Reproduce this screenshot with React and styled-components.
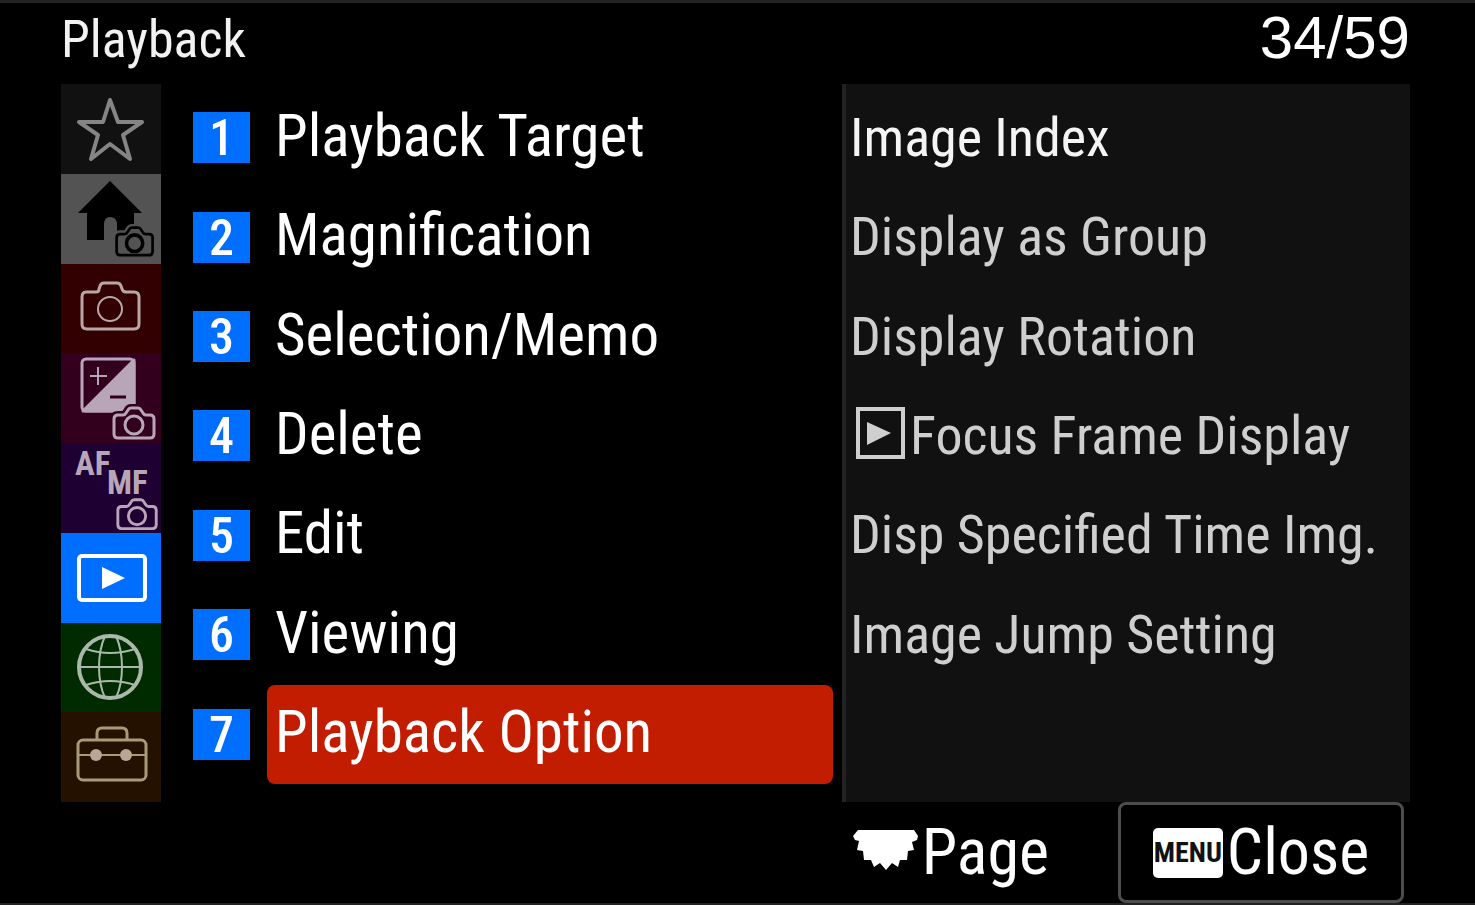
import React, { useState } from "react";
import styled, { createGlobalStyle } from "styled-components";

const GlobalStyle = createGlobalStyle`
  *, *::before, *::after { box-sizing: border-box; }
  body {
    margin: 0;
    background: #000;
    font-family: "Roboto Condensed", "Liberation Sans Narrow", "Liberation Sans", sans-serif;
  }
  button {
    margin: 0;
    padding: 0;
    border: 0;
    background: none;
    color: inherit;
    font: inherit;
    text-align: left;
    cursor: pointer;
  }
`;

const Screen = styled.div`
  min-height: 100vh;
  display: flex;
  flex-direction: column;
  padding: 0 65px 0 61px;
  border-top: 3px solid #222;
  border-bottom: 2px solid #222;
  background: #000;
  color: #fff;
`;

const Header = styled.header`
  display: flex;
  align-items: center;
  justify-content: space-between;
  height: 81px;
  padding-bottom: 8px;
`;

const Title = styled.h1`
  margin: 0;
  font-size: 52px;
  font-weight: 400;
  line-height: 64px;
  color: #f2f2f2;
`;

const Counter = styled.span`
  padding-bottom: 4px;
  font-family: "Liberation Sans", sans-serif;
  font-size: 60px;
  line-height: 64px;
`;

const Main = styled.main`
  flex: 1;
  display: grid;
  grid-template-columns: 100px minmax(0, 681fr) minmax(0, 568fr);
`;

const TabBar = styled.nav`
  display: grid;
  grid-template-rows: repeat(8, 1fr);
`;

const Tab = styled.button`
  display: flex;
  align-items: center;
  justify-content: center;
  min-height: 0;
  background: ${(p) => p.$bg};
  color: ${(p) => p.$fg};
`;

const TabIcon = styled.svg`
  display: block;
  width: 100px;
  height: 88px;
  fill: none;
  stroke: currentColor;
  stroke-width: 3;
  stroke-linejoin: round;
`;

const IconLabel = styled.text`
  fill: currentColor;
  stroke: none;
  font-size: 33px;
  font-weight: 700;
`;

const Menu = styled.div`
  display: grid;
  grid-template-rows: repeat(7, 1fr);
  padding: 4px 9px 18px 32px;
`;

const MenuRow = styled.button`
  display: grid;
  grid-template-columns: 57px 1fr;
  gap: 17px;
  align-items: center;
`;

const Badge = styled.span`
  height: 51px;
  background: #006eff;
  font-size: 50px;
  font-weight: 500;
  line-height: 52px;
  text-align: center;
`;

const MenuLabel = styled.span`
  display: flex;
  align-items: center;
  height: 100%;
  padding: 0 8px 4px;
  border-radius: 8px;
  background: ${(p) => (p.$selected ? "#c21d00" : "transparent")};
  font-size: 59px;
  line-height: 72px;
  white-space: nowrap;
`;

const Preview = styled.ul`
  display: grid;
  grid-template-rows: repeat(7, 1fr);
  margin: 0;
  padding: 4px 0 18px 4px;
  border-left: 4px solid #222;
  background: #111;
  list-style: none;
`;

const PreviewItem = styled.li`
  display: flex;
  align-items: center;
  gap: 5px;
  color: ${(p) => (p.$active ? "#f4f4f4" : "#cfcfcf")};
  font-size: 54px;
  line-height: 64px;
  white-space: nowrap;
`;

const PlayBox = styled.svg`
  width: 49px;
  height: 52px;
  margin: 0 0 6px 6px;
`;

const Footer = styled.footer`
  display: flex;
  align-items: center;
  justify-content: flex-end;
  gap: 69px;
  height: 101px;
  padding-right: 6px;
`;

const FooterButton = styled.button`
  display: flex;
  align-items: center;
  justify-content: center;
  gap: 4px;
  height: 100%;
  font-size: 64px;
  line-height: 72px;
`;

const CloseButton = styled(FooterButton)`
  width: 286px;
  border: 3px solid #4d4d4d;
  border-radius: 8px;
`;

const MenuKey = styled.span`
  width: 70px;
  height: 50px;
  border-radius: 5px;
  background: #fff;
  color: #111;
  font-size: 28px;
  font-weight: 700;
  line-height: 50px;
  text-align: center;
`;

const WheelIcon = styled.svg`
  width: 65px;
  height: 41px;
  margin-bottom: 4px;
`;

function SmallCamera({ cut, lens = 3 }) {
  const body =
    "M58 62H63Q65 62 66 60L68 57Q69 55 71 55H78Q80 55 81 57L83 60Q84 62 86 62H90Q94 62 94 66V81Q94 85 90 85H58Q54 85 54 81V66Q54 62 58 62Z";
  return (
    <g>
      <path d={body} fill={cut} stroke={cut} strokeWidth="8" />
      <path d={body} />
      <circle cx="74" cy="72" r="9" strokeWidth={lens} />
    </g>
  );
}

const tabs = [
  {
    name: "My Menu",
    bg: "#111",
    fg: "#858585",
    icon: (
      <path d="M49 16L57 38H81L62 51L69 75L49 60L30 75L37 51L18 38H42Z" strokeWidth="4" />
    ),
  },
  {
    name: "Main",
    bg: "#535353",
    fg: "#000",
    icon: (
      <>
        <path
          d="M49 7L81 39H73V66H56V49Q55 43 49 43Q43 43 43 51V66H26V39H17Z"
          fill="currentColor"
          stroke="none"
        />
        <g transform="translate(7 3) scale(.9 .92)">
          <SmallCamera cut="#535353" lens={4} />
        </g>
      </>
    ),
  },
  {
    name: "Shooting",
    bg: "#320000",
    fg: "#b9a7a7",
    icon: (
      <>
        <path d="M25 29H35Q38 29 38 26L39 23Q40 20 43 20H56Q59 20 60 23L61 26Q62 29 65 29H73Q78 29 78 34V61Q78 66 73 66H26Q21 66 21 61V34Q21 29 25 29Z" />
        <circle cx="49" cy="46" r="12" strokeWidth="2" />
      </>
    ),
  },
  {
    name: "Exposure and Color",
    bg: "#32001d",
    fg: "#b9a5b8",
    icon: (
      <>
        <path d="M73 7V58H22Z" fill="currentColor" />
        <rect x="21" y="6" width="52" height="52" rx="4" />
        <path d="M29 23H46M37 14V32" strokeWidth="2" />
        <path d="M49 44H65" stroke="#32001d" />
        <g transform="translate(-1 0)">
          <SmallCamera cut="#32001d" />
        </g>
      </>
    ),
  },
  {
    name: "Focus",
    bg: "#1f0032",
    fg: "#b8a6b8",
    icon: (
      <>
        <IconLabel x="14" y="32">AF</IconLabel>
        <IconLabel x="46" y="51">MF</IconLabel>
        <g transform="translate(5 4) scale(.96)">
          <SmallCamera cut="#1f0032" />
        </g>
      </>
    ),
  },
  {
    name: "Playback",
    bg: "#006eff",
    fg: "#fff",
    icon: (
      <>
        <rect x="18" y="23" width="66" height="44" rx="3" strokeWidth="4" />
        <path d="M41 34L64 45L41 56Z" fill="currentColor" stroke="none" />
      </>
    ),
  },
  {
    name: "Network",
    bg: "#002a00",
    fg: "#a9b9a9",
    icon: (
      <>
        <circle cx="49" cy="45" r="31" strokeWidth="4" />
        <path
          d="M18 45H80M25 27Q49 35 74 27M25 63Q49 55 74 63M44 14C36 32 36 58 44 76M55 14C63 32 63 58 55 76"
          strokeWidth="2"
        />
      </>
    ),
  },
  {
    name: "Setup",
    bg: "#251100",
    fg: "#a89c78",
    icon: (
      <>
        <rect x="17" y="28" width="68" height="40" rx="5" />
        <path d="M36 28V21Q36 16 41 16H61Q66 16 66 21V28" />
        <path d="M17 43H85" strokeWidth="2" />
        <circle cx="35" cy="43" r="6" fill="#b9a796" stroke="none" />
        <circle cx="65" cy="43" r="6" fill="#b9a796" stroke="none" />
      </>
    ),
  },
];

const groups = [
  "Playback Target",
  "Magnification",
  "Selection/Memo",
  "Delete",
  "Edit",
  "Viewing",
  "Playback Option",
];

const options = [
  { label: "Image Index", active: true },
  { label: "Display as Group" },
  { label: "Display Rotation" },
  { label: "Focus Frame Display", play: true },
  { label: "Disp Specified Time Img." },
  { label: "Image Jump Setting" },
];

export default function App() {
  const [selected, setSelected] = useState(6);
  return (
    <>
      <GlobalStyle />
      <Screen>
        <Header>
          <Title>Playback</Title>
          <Counter>34/59</Counter>
        </Header>
        <Main>
          <TabBar aria-label="Menu tabs">
            {tabs.map((t) => (
              <Tab key={t.name} type="button" aria-label={t.name} $bg={t.bg} $fg={t.fg}>
                <TabIcon viewBox="0 1 100 88" aria-hidden="true">
                  {t.icon}
                </TabIcon>
              </Tab>
            ))}
          </TabBar>
          <Menu>
            {groups.map((label, i) => (
              <MenuRow key={label} type="button" onClick={() => setSelected(i)}>
                <Badge>{i + 1}</Badge>
                <MenuLabel $selected={i === selected}>{label}</MenuLabel>
              </MenuRow>
            ))}
          </Menu>
          <Preview>
            {options.map((o) => (
              <PreviewItem key={o.label} $active={o.active}>
                {o.play && (
                  <PlayBox viewBox="0 0 49 52" aria-hidden="true">
                    <rect x="2" y="2" width="45" height="48" fill="none" stroke="currentColor" strokeWidth="4" />
                    <path d="M11 15L35 26L11 38Z" fill="currentColor" />
                  </PlayBox>
                )}
                {o.label}
              </PreviewItem>
            ))}
          </Preview>
        </Main>
        <Footer>
          <FooterButton type="button">
            <WheelIcon viewBox="0 0 65 41" aria-hidden="true">
              <path
                d="M5 0H61L65 6L64 10L59 12L61 20L55 21L54 30L47 30L45 37L39 33L33 40L27 33L21 37L18 30H11L10 21L4 20L6 11L2 10L0 6Z"
                fill="#fff"
              />
            </WheelIcon>
            Page
          </FooterButton>
          <CloseButton type="button">
            <MenuKey>MENU</MenuKey>
            Close
          </CloseButton>
        </Footer>
      </Screen>
    </>
  );
}
